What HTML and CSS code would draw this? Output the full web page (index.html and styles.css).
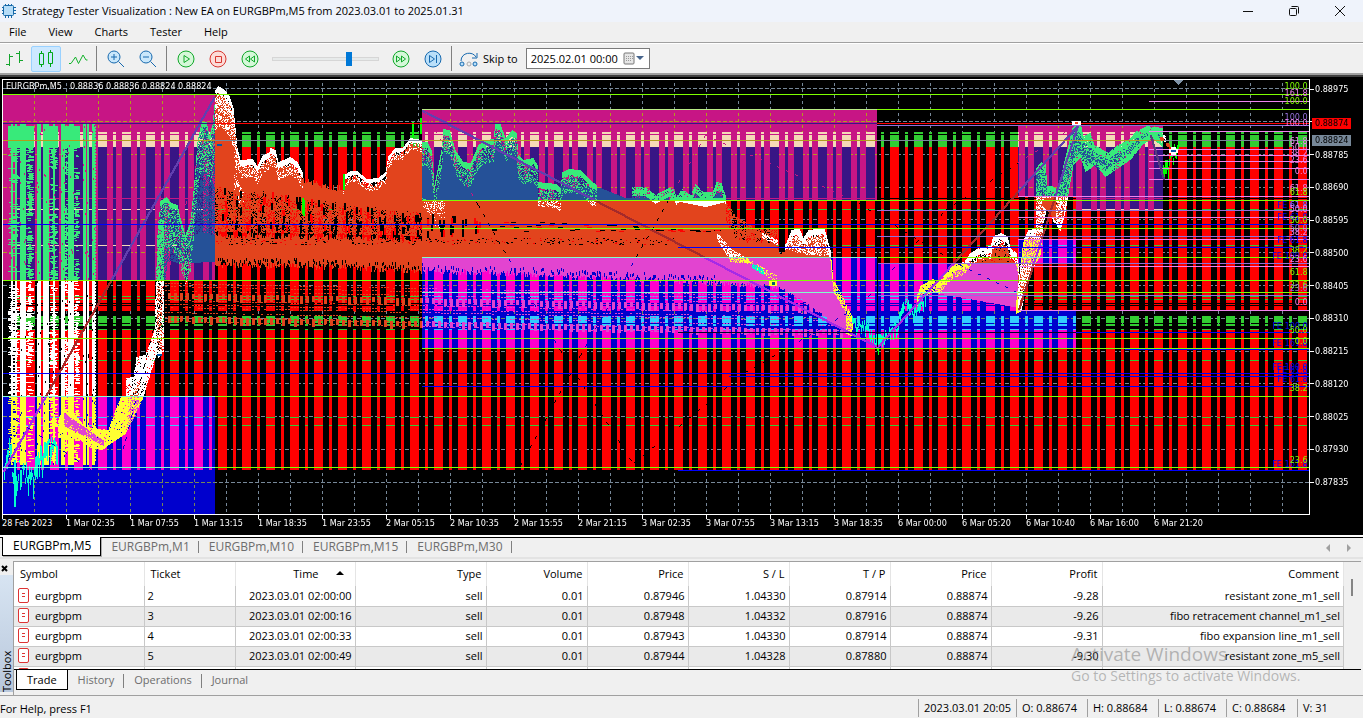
FILE: index.html
```html
<!DOCTYPE html>
<html lang="en">
<head>
<meta charset="utf-8">
<title>Strategy Tester Visualization</title>
<link rel="stylesheet" href="styles.css">
</head>
<body>
<div class="app">
  <header class="titlebar">
    <svg class="app-icon" viewBox="0 0 16 16" width="16" height="16"><g stroke="#1668a8" fill="none"><path d="M4.500 1v14M7.500 1v14M10.500 1v14M1 4.500h14M1 7.500h14M1 10.500h14"/><rect x="2.500" y="2.500" width="10" height="10" rx="1" fill="#b5dcf7"/></g></svg>
    <h1 class="title">Strategy Tester Visualization : New EA on EURGBPm,M5 from 2023.03.01 to 2025.01.31</h1>
    <div class="window-buttons">
      <button class="win-btn" aria-label="Minimize"><svg width="12" height="12"><path d="M1 6.500h10" stroke="#111"/></svg></button>
      <button class="win-btn" aria-label="Restore"><svg width="12" height="12" fill="none" stroke="#111"><rect x="1.500" y="3.500" width="7" height="7" rx="1"/><path d="M3.500 1.500h6q1 0 1 1v6"/></svg></button>
      <button class="win-btn" aria-label="Close"><svg width="12" height="12"><path d="M1 1l10 10M11 1L1 11" stroke="#111"/></svg></button>
    </div>
  </header>
  <nav class="menubar">
    <button class="menu-item">File</button>
    <button class="menu-item">View</button>
    <button class="menu-item">Charts</button>
    <button class="menu-item">Tester</button>
    <button class="menu-item">Help</button>
  </nav>
  <div class="toolbar">
    <button class="tool" aria-label="Bars"><svg width="20" height="20" fill="none" stroke="#14a52c"><path d="M2 15.500h3M5.500 5v12M5.500 7.500H9M12 4.500h3.500M15.500 2v12M15.500 11.500H19"/></svg></button>
    <button class="tool tool-active" aria-label="Candles"><svg width="20" height="20" fill="none" stroke="#00a816"><path d="M5.500 2v3M5.500 15v3M14.500 1v3M14.500 14v4"/><path d="M3.500 4.500h4v11h-4zM12.500 3.500h4v11h-4z"/></svg></button>
    <button class="tool" aria-label="Line"><svg width="20" height="20" fill="none" stroke="#14b32c"><path d="M1 14.500h2L7.500 8l3 6.500L15 6l3 5h1.500"/></svg></button>
    <span class="sep"></span>
    <button class="tool" aria-label="Zoom in"><svg width="20" height="20" fill="none" stroke="#1769ae"><circle cx="8" cy="8" r="6" fill="#c9e7fb"/><path d="M8 5v6M5 8h6M12.500 12.500L18 18"/></svg></button>
    <button class="tool" aria-label="Zoom out"><svg width="20" height="20" fill="none" stroke="#1769ae"><circle cx="8" cy="8" r="6" fill="#c9e7fb"/><path d="M5 8h6M12.500 12.500L18 18"/></svg></button>
    <span class="sep"></span>
    <button class="tool" aria-label="Play"><svg width="20" height="20" fill="none" stroke="#12a82b"><circle cx="10" cy="10" r="8" fill="#d5f8d9"/><path d="M8 6.500v7l5.500-3.500z"/></svg></button>
    <button class="tool" aria-label="Stop"><svg width="20" height="20" fill="none" stroke="#d8362f"><circle cx="10" cy="10" r="8" fill="#fcdcd8"/><path d="M7.500 7.500h6v6h-6z"/></svg></button>
    <button class="tool" aria-label="Slower"><svg width="20" height="20" fill="none" stroke="#12a82b"><circle cx="10" cy="10" r="8" fill="#d5f8d9"/><path d="M9.500 7v6L5.500 10zM14.500 7v6l-4-3z"/></svg></button>
    <input class="speed" type="range" min="0" max="100" value="74" aria-label="Speed">
    <button class="tool" aria-label="Faster"><svg width="20" height="20" fill="none" stroke="#12a82b"><circle cx="10" cy="10" r="8" fill="#d5f8d9"/><path d="M5.500 7v6l4-3zM10.500 7v6l4-3z"/></svg></button>
    <button class="tool" aria-label="Step"><svg width="20" height="20" fill="none" stroke="#1769ae"><circle cx="10" cy="10" r="8" fill="#b9dff9"/><path d="M6.500 6.500v7l5-3.500zM13.500 6v8"/></svg></button>
    <span class="sep"></span>
    <button class="skip"><svg width="20" height="20" fill="none" stroke="#1769ae"><path d="M2 12C2 3 14 2 17 8M18 4v5h-5"/><circle cx="3" cy="15" r="2" fill="#b9dff9"/><circle cx="10" cy="15" r="2" stroke="#aaa"/><circle cx="16" cy="15" r="2" fill="#b9dff9"/></svg>Skip to</button>
    <div class="datebox">
      <input class="date" type="text" value="2025.02.01 00:00" aria-label="Skip to date">
      <button class="date-btn" aria-label="Open calendar"><svg width="22" height="13"><rect x="1" y="1" width="10" height="11" rx="1" fill="#e6e6e6" stroke="#777"/><path d="M3 4.500h7M3 6.500h7M3 8.500h5" stroke="#999" stroke-dasharray="1 1"/><path d="M13 4h8l-4 4z" fill="#46648c"/></svg></button>
    </div>
  </div>

  <main class="chart">
    <div class="plot">
      <canvas class="plot-canvas" id="plot" width="1306" height="434"></canvas>
      <svg class="levels" id="levels"></svg>
      <div class="quote"><span>EURGBPm,M5</span><span>0.88836 0.88836 0.88824 0.88824</span></div>
    </div>
    <div class="prices">
      <div class="price">0.88975</div><div class="price"></div><div class="price">0.88785</div><div class="price">0.88690</div><div class="price">0.88595</div><div class="price">0.88500</div><div class="price">0.88405</div><div class="price">0.88310</div><div class="price">0.88215</div><div class="price">0.88120</div><div class="price">0.88025</div><div class="price">0.87930</div><div class="price">0.87835</div>
      <div class="tag tag-ask">0.88874</div>
      <div class="tag tag-bid">0.88824</div>
    </div>
    <div class="times">
      <span class="time">28 Feb 2023</span><span class="time">1 Mar 02:35</span><span class="time">1 Mar 07:55</span><span class="time">1 Mar 13:15</span><span class="time">1 Mar 18:35</span><span class="time">1 Mar 23:55</span><span class="time">2 Mar 05:15</span><span class="time">2 Mar 10:35</span><span class="time">2 Mar 15:55</span><span class="time">2 Mar 21:15</span><span class="time">3 Mar 02:35</span><span class="time">3 Mar 07:55</span><span class="time">3 Mar 13:15</span><span class="time">3 Mar 18:35</span><span class="time">6 Mar 00:00</span><span class="time">6 Mar 05:20</span><span class="time">6 Mar 10:40</span><span class="time">6 Mar 16:00</span><span class="time">6 Mar 21:20</span><span class="time-rest"></span>
    </div>
  </main>

  <nav class="tabs">
    <button class="tab tab-on">EURGBPm,M5</button><button class="tab">EURGBPm,M1</button><button class="tab">EURGBPm,M10</button><button class="tab">EURGBPm,M15</button><button class="tab">EURGBPm,M30</button>
    <span class="tab-scroll"><svg width="28" height="8" fill="#a0a0a0"><path d="M5 0v8L1 4zM22 0v8l4-4z"/></svg></span>
  </nav>

  <section class="toolbox">
    <div class="side">
      <button class="side-close" aria-label="Close toolbox"><svg width="7" height="7"><path d="M1 1l5 5M6 1L1 6" stroke="#000" stroke-width="2"/></svg></button>
      <div class="side-label"><span class="side-text">Toolbox</span></div>
    </div>
    <div class="panel">
      <div class="scroller">
        <table class="trades">
          <colgroup><col class="c130"><col class="c91"><col class="c120"><col class="c131"><col class="c101"><col class="c101"><col class="c101"><col class="c101"><col class="c101"><col class="c111"><col></colgroup>
          <thead><tr><th class="l">Symbol</th><th class="l">Ticket</th><th>Time<svg class="sort" width="8" height="4"><path d="M0 4h8L4 0z"/></svg></th><th>Type</th><th>Volume</th><th>Price</th><th>S / L</th><th>T / P</th><th>Price</th><th>Profit</th><th>Comment</th></tr></thead>
          <tbody>
            <tr><td class="l"><i class="doc"></i>eurgbpm</td><td class="n">2</td><td>2023.03.01 02:00:00</td><td>sell</td><td>0.01</td><td>0.87946</td><td>1.04330</td><td>0.87914</td><td>0.88874</td><td>-9.28</td><td>resistant zone_m1_sell</td></tr>
            <tr><td class="l"><i class="doc"></i>eurgbpm</td><td class="n">3</td><td>2023.03.01 02:00:16</td><td>sell</td><td>0.01</td><td>0.87948</td><td>1.04332</td><td>0.87916</td><td>0.88874</td><td>-9.26</td><td>fibo retracement channel_m1_sel</td></tr>
            <tr><td class="l"><i class="doc"></i>eurgbpm</td><td class="n">4</td><td>2023.03.01 02:00:33</td><td>sell</td><td>0.01</td><td>0.87943</td><td>1.04330</td><td>0.87914</td><td>0.88874</td><td>-9.31</td><td>fibo expansion line_m1_sell</td></tr>
            <tr><td class="l"><i class="doc"></i>eurgbpm</td><td class="n">5</td><td>2023.03.01 02:00:49</td><td>sell</td><td>0.01</td><td>0.87944</td><td>1.04328</td><td>0.87880</td><td>0.88874</td><td>-9.30</td><td>resistant zone_m5_sell</td></tr>
            <tr><td class="l"><i class="doc"></i></td><td></td><td></td><td></td><td></td><td></td><td></td><td></td><td></td><td></td><td></td></tr>
          </tbody>
        </table>
        <div class="scrollbar"><div class="thumb"></div></div>
      </div>
      <nav class="subtabs"><button class="subtab subtab-on">Trade</button><button class="subtab">History</button><button class="subtab">Operations</button><button class="subtab">Journal</button></nav>
    </div>
    <div class="watermark"><div class="wm-big">Activate Windows</div><div class="wm-small">Go to Settings to activate Windows.</div></div>
  </section>

  <footer class="status">
    <span class="help">For Help, press F1</span>
    <span class="cell cell-date">2023.03.01 20:05</span><span class="cell">O: 0.88674</span><span class="cell">H: 0.88684</span><span class="cell">L: 0.88674</span><span class="cell">C: 0.88684</span><span class="cell">V: 31</span>
  </footer>
</div>
<script src="chart.js"></script>
</body>
</html>
```
FILE: styles.css
```css
* { box-sizing: border-box; }
body { margin: 0; background: #f0f0f0; color: #000; font-family: "Open Sans", "Noto Sans", sans-serif; font-size: 11px; }
button, input { font: inherit; color: inherit; border: 0; background: none; padding: 0; margin: 0; }
.app { display: flex; flex-direction: column; height: 100vh; min-height: 480px; overflow: hidden; }

.titlebar { display: flex; align-items: center; flex: none; height: 22px; background: #eff3fb; }
.title { flex: 1; margin: 0 0 0 5px; font-size: 11px; font-weight: 400; line-height: 20px; white-space: nowrap; }
.app-icon { margin-left: 1px; }
.window-buttons { display: flex; }
.win-btn { width: 46px; height: 18px; display: grid; place-items: center; }
.menubar { display: flex; flex: none; height: 21px; border-bottom: 1px solid #a0a0a0; padding-left: 9px; gap: 22px; }
.menu-item { line-height: 20px; }
.toolbar { display: flex; align-items: center; flex: none; height: 32px; border-top: 1px solid #fff; border-bottom: 2px solid #a0a0a0; }
.tool { width: 30px; height: 26px; margin-right: 2px; display: grid; place-items: center; flex: none; }
.tool:first-child { margin-left: -1px; }
.tool-active { background: #cce8ff; border: 1px solid #99d1ff; border-radius: 2px; }
.sep { width: 1px; height: 25px; background: #808080; margin: 0 4px 0 1px; }
.speed { -webkit-appearance: none; appearance: none; width: 107px; height: 20px; margin: 0 7px 0 5px; }
.speed::-webkit-slider-runnable-track { height: 4px; background: #e7eaea; border: 1px solid #d6d6d6; }
.speed::-webkit-slider-thumb { -webkit-appearance: none; width: 6px; height: 14px; margin-top: -6px; background: #0078d7; }
.skip { display: flex; align-items: center; gap: 4px; margin-left: 3px; white-space: nowrap; }
.datebox { display: flex; align-items: center; width: 124px; height: 21px; margin-left: 8px; background: #fff; border: 1px solid #7a7a7a; }
.date { width: 96px; padding-left: 4px; }
.date-btn { display: flex; }

.chart { flex: 1; min-height: 200px; display: grid; grid-template-columns: 1fr 53px; grid-template-rows: 1fr 20px; background: #000; border-top: 2px solid #404040; padding: 2px 0 0 2px; color: #fff; font: 9px "DejaVu Sans Condensed", "DejaVu Sans", sans-serif; }
.plot { position: relative; min-height: 0; border: 1px solid #fff; }
.plot-canvas, .levels { position: absolute; left: 0; top: 0; width: 100%; height: 100%; }
.plot-canvas { image-rendering: pixelated; }
.quote { position: absolute; left: 3px; top: 1px; display: flex; gap: 8px; line-height: 11px; white-space: nowrap; }
.prices { position: relative; display: flex; flex-direction: column; justify-content: space-between; padding: 3px 0 26px; }
.price { height: 14px; line-height: 14px; display: flex; align-items: center; gap: 1px; }
.price::before { content: ""; width: 4px; height: 1px; background: #fff; }
.tag { position: absolute; left: 2px; width: 39px; height: 11px; line-height: 11px; padding-left: 3px; color: #000; }
.tag-ask { top: 39px; background: #f00; }
.tag-bid { top: 56px; background: #778899; }
.times { display: flex; grid-column: 1; line-height: 17px; white-space: nowrap; }
.time { flex: 64 1 0; width: 0; position: relative; }
.time::before { content: ""; position: absolute; left: 0; top: 0; width: 1px; height: 4px; background: #fff; }
.time-rest { flex: 92 1 0; }

.tabs { display: flex; flex: none; height: 24px; border-top: 2px solid #fff; border-bottom: 2px solid #e3e3e3; background: linear-gradient(#000 0 1px, #f0f0f0 1px); padding-left: 2px; }
.tab { color: #6d6d6d; font-size: 12px; line-height: 18px; padding: 0 9px 0 10px; position: relative; height: 19px; }
.tab + .tab::after { content: ""; position: absolute; right: 0; top: 4px; height: 12px; width: 1px; background: #808080; }
.tab-on { background: #fff; color: #000; border: solid #000; border-width: 0 1px 1px; box-shadow: 1px 1px #aaa; }
.tab-scroll { display: flex; align-items: flex-start; margin-left: auto; padding: 7px 10px 0 0; }

.toolbox { position: relative; flex: none; display: flex; height: 136px; padding-top: 2px; }
.side { width: 13px; display: flex; flex-direction: column; }
.side-close { height: 14px; padding: 0 0 0 1px; text-align: left; line-height: 7px; }
.side-label { flex: 1; background: linear-gradient(#d7e4f2, #b9c8dc); display: flex; justify-content: center; margin-bottom: 3px; }
.side-text { writing-mode: vertical-rl; transform: rotate(180deg); line-height: 12px; }
.panel { flex: 1; min-width: 0; display: flex; flex-direction: column; border-left: 1px solid #a0a0a0; }
.scroller { display: flex; height: 109px; overflow: hidden; border-top: 1px solid #a0a0a0; border-bottom: 1px solid #000; margin-right: 2px; }
.trades { flex: 1; table-layout: fixed; border-collapse: collapse; background: #fff; width: 100%; }
.c130 { width: 130px; } .c131 { width: 131px; } .c91 { width: 91px; } .c120 { width: 120px; } .c101 { width: 101px; } .c111 { width: 111px; }
.trades th { height: 24px; padding: 0 4px 0 0; font-weight: 400; text-align: right; border-right: 1px solid #e5e5e5; line-height: 20px; }
.trades td { height: 20px; padding: 0 3px 0 0; text-align: right; border-right: 1px solid #c8c8c8; border-bottom: 1px solid #c8c8c8; white-space: nowrap; line-height: 18px; }
.trades tbody tr:nth-child(even) { background: #eaeaea; }
.trades th.l { text-align: left; padding-left: 6px; }
.trades td.l { text-align: left; padding-left: 4px; }
.trades td.n { text-align: left; padding-left: 3px; }
.sort { margin: 0 7px 3px 17px; }
.doc { display: inline-block; width: 11px; height: 15px; margin-right: 6px; vertical-align: -3px; border: 1px solid #d33; border-radius: 2px; background: linear-gradient(#d33, #d33) 3px 4px / 3px 1px no-repeat, linear-gradient(#d33, #d33) 3px 7px / 3px 1px no-repeat, #fff; }
.scrollbar { width: 17px; background: #f0f0f0; padding: 17px 0 0 7px; flex: none; }
.thumb { width: 2px; height: 17px; background: #858585; }
.subtabs { display: flex; padding-left: 2px; }
.subtab { position: relative; height: 20px; padding: 0 10px; color: #6d6d6d; line-height: 18px; }
.subtab + .subtab::after { content: ""; position: absolute; right: 0; top: 4px; width: 1px; height: 14px; background: #808080; }
.subtab:last-child::after { display: none; }
.subtab-on { background: #fff; color: #000; border: solid #000; border-width: 0 1px 1px; }
.watermark { position: absolute; right: 55px; bottom: 9px; width: 237px; color: rgba(120, 120, 120, .5); white-space: nowrap; pointer-events: none; }
.wm-big { font-size: 19px; line-height: 24px; }
.wm-small { font-size: 14px; line-height: 20px; }

.status { display: flex; align-items: center; flex: none; height: 23px; border-top: 1px solid #a0a0a0; padding-top: 2px; }
.help { flex: 1; }
.cell { border-left: 1px solid #a0a0a0; padding-left: 5px; width: 71px; line-height: 18px; white-space: nowrap; }
.cell-date { width: 98px; }
.cell:nth-child(5) { width: 68px; }
.cell:last-child { width: 66px; }
```
FILE: chart.js
```js
const canvas = document.getElementById('plot');
const g = canvas.getContext('2d', { willReadFrequently: true });
const X0 = 3, Y0 = 80, R = 1309, B = 514;
g.translate(-X0, -Y0);

let seed = 7;
const rnd = () => (seed = (seed * 1664525 + 1013904223) >>> 0) / 4294967296;
const rect = (c, x, y, w, h) => { g.fillStyle = c; g.fillRect(x, y, w, h); };
const ORANGE = '#e2441d', WHITE = '#fff', LIME = '#0f0', LEVEL = '#7fff00';

function at(p, x) {
  if (x <= p[0][0]) return p[0][1];
  for (let i = 1; i < p.length; i++) {
    if (x <= p[i][0]) {
      const [ax, ay] = p[i - 1], [bx, by] = p[i];
      return ay + (by - ay) * (x - ax) / (bx - ax || 1);
    }
  }
  return p[p.length - 1][1];
}
function band(c, x0, x1, top, bot, density = 1, jitter = 0) {
  for (let x = x0; x < x1; x++) {
    const a = Math.round(at(top, x) + rnd() * jitter), b = Math.round(at(bot, x) + rnd() * jitter);
    if (density >= 1) rect(c, x, a, 1, Math.max(0, b - a));
    else for (let y = a; y < b; y++) if (rnd() < density) rect(c, x, y, 1, 1);
  }
}
const shift = (p, d) => p.map(([x, y]) => [x, y + d]);
function pixline(c, x0, y0, x1, y1, size = 1, dash = 0) {
  const n = Math.max(Math.abs(x1 - x0), Math.abs(y1 - y0));
  for (let i = 0; i <= n; i++) {
    if (dash && i % (dash * 3) >= dash) continue;
    rect(c, Math.round(x0 + (x1 - x0) * i / n), Math.round(y0 + (y1 - y0) * i / n), size, size);
  }
}
function path(c, pts, size, dash) {
  for (let i = 1; i < pts.length; i++) pixline(c, ...pts[i - 1], ...pts[i], size, dash);
}
function dashes(c, x0, x1, y, h, on, period, off = 0) {
  for (let x = x0 + off; x < x1; x += period) rect(c, x, y, Math.min(on, x1 - x), h);
}
function candles(c, pts, spread) {
  for (let x = pts[0][0]; x < pts[pts.length - 1][0]; x++) {
    const y = at(pts, x) + (rnd() - .5) * spread;
    rect(c, x, Math.round(y), 1, Math.round(3 + rnd() * spread));
  }
}

rect('#000', X0, Y0, R - X0, B - Y0);

// grid
for (const y of [88, 121, 154, 187, 219, 252, 285, 318, 351, 383, 416, 449, 482]) dashes('#778899', 3, R, y, 1, 4, 6);
for (let x = 34; x < R; x += 32) for (let y = 83; y < B; y += 6) rect('#778899', x, y, 1, 3);

// session stripes
for (let k = -16; k < 39; k++) {
  for (const [x, w] of [[386 + 24 * k, 9], [401 + 24 * k, 3]]) {
    if (x < 3 || x > 1300) continue;
    rect('#f00', x, 147, w, 164);
    rect('#f00', x, 330, w, 140);
    for (const [y, h] of [[132, 2], [135, 12], [209, 1], [245, 1], [296, 1], [299, 1], [316, 7], [324, 2], [329, 1], [360, 1], [417, 1], [425, 1]]) rect('#32cd32', x, y, w, h);
    for (const y of [198, 303, 305]) rect('#000', x, y, w, 1);
  }
}

// dense columns at the left edge
for (const [x, w] of [[11, 2], [15, 2], [20, 6], [37, 4], [43, 6], [53, 2], [61, 4], [68, 6], [83, 3], [87, 2], [92, 3]]) {
  rect(WHITE, x, 124, w, 341);
  for (let y = 124; y < 465; y++) if (rnd() < .05) rect('#000', x + Math.floor(rnd() * w), y, 1, 2);
}
for (const [x, w] of [[8, 12], [26, 8], [49, 9], [65, 3], [74, 6]]) {
  let run = 0, on = false;
  for (let y = 126; y < 462; y++) {
    if (run-- <= 0) { run = 8 + rnd() * 16; on = rnd() < .7; }
    if (on ? rnd() < .8 : rnd() < .25) {
      const o = Math.floor(rnd() * w * .5);
      rect(WHITE, x + o, y, Math.ceil((w - o) * (.3 + rnd() * .7)), 1);
    }
  }
  rect(WHITE, x, 126, w, 22);
}
for (let y = 126; y < 460; y += 3) rect(WHITE, 95, y, 1, 2);

// dashed rows of order arrows
for (let x = 165; x < 845; x += 3) {
  const d = (x - 165) * .02;
  const end = x < 700 ? 1 : 1 - (x - 700) / 260;
  for (const y of [283, 286, 290, 300, 304, 307, 312, 317, 321]) if (rnd() < .62 * end + .1) rect(ORANGE, x, Math.round(y + d), 2, 1);
  if (x % 6 < 3) for (const y of [293, 316]) rect(ORANGE, x, Math.round(y + d), 3, 5 + Math.floor(rnd() * 4));
}

// first fall: white crest over the order mass
const crest1 = [[215, 90], [218, 86], [224, 90], [229, 96], [233, 108], [237, 148], [240, 160], [252, 159], [257, 166], [262, 156], [269, 152], [270, 148], [275, 150], [278, 162], [290, 157], [297, 162], [303, 174], [330, 181], [343, 183], [344, 175], [350, 171], [357, 171], [366, 179], [378, 178], [385, 172], [388, 156], [395, 148], [402, 148], [410, 138], [422, 140]];
const upperBottom = [[215, 186], [260, 190], [300, 196], [350, 204], [422, 212], [500, 220], [560, 223], [700, 229]];
const lowerTop = [[215, 232], [422, 236], [700, 238]];
const lowerBottom = [[215, 262], [300, 263], [422, 268], [500, 270], [620, 276], [720, 280], [770, 283], [800, 298], [850, 334]];
band(ORANGE, 215, 422, shift(crest1, 3), upperBottom, 1, 6);
band(WHITE, 215, 303, crest1, shift(crest1, 6));
band(WHITE, 215, 303, shift(crest1, 5), shift(crest1, 18), .35);
band(WHITE, 215, 237, crest1, shift(crest1, 40), .45);
band(WHITE, 343, 422, crest1, shift(crest1, 4));
band(WHITE, 343, 422, shift(crest1, 4), shift(crest1, 12), .35);
rect('#0058a8', 217, 144, 5, 2); rect('#0058a8', 237, 200, 5, 2);
band(WHITE, 234, 245, [[234, 175], [245, 195]], [[234, 195], [240, 204], [245, 200]], .5);

// second crest, mostly inside the upper zone
const crest2 = [[422, 142], [427, 142], [431, 150], [434, 185], [437, 170], [441, 150], [443, 129], [449, 130], [455, 150], [463, 162], [470, 163], [478, 145], [485, 140], [493, 139], [495, 123], [500, 124], [505, 138], [512, 130], [516, 133], [518, 155], [523, 160], [533, 158], [537, 165], [537, 182], [556, 184], [560, 188], [562, 172], [568, 169], [580, 170], [590, 180], [597, 186], [612, 190], [623, 200], [631, 200], [632, 187], [645, 187], [655, 195], [668, 188], [673, 189], [676, 196], [682, 189], [690, 195], [695, 184], [703, 192], [712, 192], [716, 182], [721, 183], [726, 198], [735, 213], [750, 222], [765, 234], [778, 247]];
band(ORANGE, 422, 726, shift(crest2, 8), shift(crest2, 17), .6);
band(ORANGE, 422, 726, shift(crest2, 16), lowerBottom, 1, 3);
band(ORANGE, 726, 778, shift(crest2, 3), shift(crest2, 24), .6);
band(ORANGE, 726, 778, shift(crest2, 22), lowerBottom, 1, 3);
band(ORANGE, 560, 726, [[560, 186], [600, 188], [625, 198]], lowerBottom);
band(WHITE, 422, 597, crest2, shift(crest2, 6));
band(WHITE, 422, 597, shift(crest2, 6), shift(crest2, 24), .35);
band(WHITE, 632, 726, crest2, shift(crest2, 9), .85);
band(WHITE, 670, 726, [[670, 198], [726, 198]], [[670, 200], [705, 207], [726, 202]]);
band(WHITE, 422, 445, [[422, 198], [430, 200]], [[422, 205], [431, 224], [440, 232], [445, 222]], .3);

// middle band under both crests
band(ORANGE, 215, 778, upperBottom, lowerTop, .72);
for (let x = 222; x < 720; x += 12) {
  const t = at(upperBottom, x);
  const k = x < 480 ? 7 : 3;
  for (let i = 0; i < k; i++) rect(rnd() < .55 ? '#000' : '#f00', x + Math.floor(rnd() * 7), Math.round(t + rnd() * (231 - t)), x < 480 ? 2 : 5, x < 480 ? 7 : 1);
}
band(ORANGE, 215, 776, lowerTop, lowerBottom, 1, 6);
for (let i = 0; i < 260; i++) {
  const x = 216 + Math.floor(rnd() * 460);
  rect(rnd() < .7 ? '#000' : '#f00', x, 238 + Math.floor(rnd() * 7), 1 + Math.floor(rnd() * 2), 1);
}
for (let i = 0; i < 260; i++) {
  const x = 216 + Math.floor(rnd() * 500);
  rect('#000', x, Math.round(at(lowerBottom, x) + 1 - rnd() * 6), 1, 3);
}

// last leg of the fall
const crest3 = [[715, 232], [720, 232], [723, 245], [740, 253], [760, 232], [775, 236], [780, 246], [786, 243], [791, 230], [799, 228], [803, 238], [808, 230], [824, 228], [830, 250], [833, 280], [840, 292], [850, 313], [854, 320]];
band(ORANGE, 776, 852, shift(crest3, 6), [[776, 284], [800, 298], [852, 336]], 1, 3);
band(WHITE, 785, 832, crest3, shift(crest3, 6));
band(WHITE, 785, 832, shift(crest3, 6), [[785, 248], [800, 254], [832, 257]], .5);
band(WHITE, 828, 853, crest3, shift(crest3, 12), .7);
band(WHITE, 762, 778, [[762, 233], [778, 240]], [[762, 238], [778, 246]], .6);
band(WHITE, 717, 750, [[717, 233], [730, 248], [750, 260]], [[717, 240], [730, 262], [750, 264]], .6);
band(WHITE, 746, 777, [[746, 258], [777, 276]], [[746, 262], [777, 284]], .4);
band(LIME, 752, 764, [[752, 263], [764, 270]], [[752, 268], [764, 276]], .8);
rect(WHITE, 769, 280, 8, 6); rect('#005fa0', 772, 282, 3, 3);
band(WHITE, 846, 853, [[846, 316], [853, 322]], [[846, 334], [853, 337]], .6);

// rise on the left
const riseTop = [[157, 235], [160, 201], [166, 197], [171, 203], [177, 205], [180, 218], [185, 235], [190, 222], [194, 180], [197, 142], [201, 122], [206, 122], [209, 135], [212, 125], [215, 95]];
const riseBottom = [[157, 280], [165, 280], [167, 262], [185, 263], [215, 262]];
band(ORANGE, 158, 215, riseTop, riseBottom, .65);
band(ORANGE, 190, 215, [[190, 240], [200, 232], [215, 236]], riseBottom);
band(WHITE, 158, 215, riseTop, shift(riseTop, 5));
band(WHITE, 158, 215, shift(riseTop, 5), shift(riseTop, 50), .35);
band(WHITE, 154, 164, [[154, 330], [157, 235], [158, 220]], [[154, 352], [158, 358], [163, 352]], .75);
band(ORANGE, 157, 162, [[157, 285], [162, 285]], [[157, 350], [162, 350]], .35);
band(WHITE, 126, 156, [[126, 378], [133, 377], [136, 357], [145, 355], [154, 330]], [[126, 410], [142, 400], [156, 355]], .88);
band(WHITE, 58, 143, [[58, 420], [62, 408], [72, 412], [86, 427], [108, 430], [115, 410], [121, 396]], [[58, 438], [80, 440], [90, 448], [102, 450], [113, 442], [125, 434], [143, 398]], .94);
band(ORANGE, 64, 104, [[64, 413], [104, 441]], [[64, 426], [104, 446]], .9);
band(ORANGE, 128, 140, [[128, 398], [140, 380]], [[128, 432], [140, 404]], .35);
rect('#0058a8', 157, 354, 5, 2);
candles(LIME, [[4, 460], [10, 445], [14, 480], [20, 465], [26, 470], [33, 468], [42, 450], [50, 445], [58, 440]], 20);
for (let y = 460; y < 507; y++) rect(LIME, 14, y, 2, 1);

// recovery
const midTop = [[917, 294], [920, 286], [932, 279], [940, 281], [947, 270], [955, 264], [964, 262], [969, 254], [978, 248], [990, 246], [993, 236], [1001, 233], [1007, 236], [1010, 248], [1016, 253], [1020, 275]];
band(ORANGE, 935, 1019, [[935, 287], [958, 268], [965, 262], [1018, 262]], [[935, 293], [1019, 308]]);
band(WHITE, 917, 1019, midTop, shift(midTop, 7), .95);
band(WHITE, 917, 1019, shift(midTop, 7), shift(midTop, 13), .5);
band(ORANGE, 978, 1016, shift(midTop, 11), [[978, 264], [1016, 264]], .85);
candles(LIME, [[852, 318], [858, 325], [865, 322], [872, 335], [878, 343], [885, 332], [897, 325], [900, 308], [908, 298], [912, 312], [920, 303], [926, 293]], 9);
rect(LIME, 876, 334, 5, 12);

const lastTop = [[1016, 300], [1020, 265], [1023, 240], [1028, 230], [1035, 229], [1036, 168], [1040, 162], [1045, 164], [1047, 186], [1052, 186], [1058, 190], [1063, 165], [1068, 145], [1073, 123], [1080, 123], [1083, 136], [1090, 133], [1094, 145], [1108, 153], [1117, 145], [1128, 140], [1136, 131], [1146, 126], [1163, 128]];
const lastBottom = [[1016, 314], [1021, 311], [1026, 285], [1034, 266], [1040, 255], [1043, 225], [1047, 205], [1053, 222], [1060, 231], [1065, 212], [1069, 188], [1073, 165], [1080, 158], [1085, 172], [1095, 165], [1105, 177], [1118, 168], [1130, 160], [1142, 145], [1152, 138], [1163, 148]];
band(WHITE, 1016, 1163, lastTop, lastBottom, .95);
band(ORANGE, 1020, 1163, shift(lastTop, 7), shift(lastBottom, -6), .4);
band(ORANGE, 1042, 1056, [[1042, 200], [1056, 196]], [[1042, 205], [1056, 222]]);
band(ORANGE, 1080, 1100, [[1080, 150], [1100, 160]], [[1080, 158], [1100, 170]], .4);
band(WHITE, 1150, 1166, [[1150, 133], [1166, 135]], [[1150, 138], [1166, 142]], .8);
candles(LIME, [[1163, 165], [1170, 160], [1176, 145], [1179, 138]], 12);
for (const [x, y] of [[302, 198], [303, 200], [412, 122], [420, 118], [343, 174]]) rect(LIME, x, y, 2, 16);

// trend lines
pixline('#a52a2a', 3, 470, 215, 94, 2);
pixline('#a52a2a', 422, 110, 876, 346, 2);
pixline('#a52a2a', 877, 346, 1077, 125, 2);
pixline('#a52a2a', 1018, 309, 1077, 125, 2);
path('#000', [[3, 411], [113, 484], [125, 440], [160, 300], [215, 92]], 1, 4);
path('#000', [[425, 112], [478, 205], [560, 350], [634, 465]], 1, 3);
path('#000', [[520, 465], [580, 355], [668, 200], [705, 135]], 1, 3);
path('#000', [[705, 135], [850, 198], [960, 265], [1055, 310]], 1, 3);
path('#000', [[634, 462], [745, 372], [860, 305], [945, 210], [1075, 125]], 1, 3);

// lines that belong below the zones
rect('#f00', 3, 123, R - 3, 1);
rect('#778899', 3, 140, R - 3, 1);
for (const [x, y] of [[422, 109], [422, 257], [422, 292], [3, 396], [3, 467]]) rect(LEVEL, x, y, R - x, 1);
rect('#00f', 678, 332, R - 678, 1);
rect('#ee82ee', 1018, 310, R - 1018, 1);

// zones invert what they cover, channel by channel
const img = g.getImageData(0, 0, canvas.width, canvas.height), d = img.data;
function zone(x0, y0, x1, y1, r, gr, b) {
  for (let y = y0 - Y0; y < y1 - Y0; y++) for (let x = x0 - X0; x < x1 - X0; x++) {
    const i = (y * canvas.width + x) * 4;
    d[i] ^= r; d[i + 1] ^= gr; d[i + 2] ^= b;
  }
}
const MAG = [0xc7, 0x15, 0x85], BLUE = [0, 0, 0xcd];
zone(3, 94, 215, 280, ...MAG);
zone(3, 396, 215, 514, ...BLUE);
zone(422, 109, 877, 200, ...MAG);
zone(422, 257, 877, 349, ...BLUE);
zone(877, 263, 1076, 349, ...BLUE);
zone(1018, 239, 1076, 311, ...BLUE);
zone(1018, 126, 1076, 197, ...MAG);
zone(1076, 126, 1163, 210, ...MAG);
g.putImageData(img, 0, 0);

// level lines above the zones
for (const [x, y] of [[3, 94], [422, 200], [422, 228], [3, 280], [3, 338], [422, 348]]) rect(LEVEL, x, y, R - x, 1);
for (const [x, y] of [[3, 224], [678, 247], [3, 373], [729, 376], [422, 386], [678, 470], [1125, 210], [1125, 349]]) rect('#00f', x, y, R - x, 1);
for (const [x, y] of [[1149, 101], [1149, 131], [1149, 149], [1149, 155], [1149, 161], [1149, 168], [1149, 179], [1018, 196], [1018, 217], [1018, 239], [1018, 266]]) rect('#ee82ee', x, y, R - x, 1);
for (const [x, y] of [[877, 125], [877, 210], [877, 236], [877, 263], [877, 295]]) rect('#9370db', x, y, R - x, 1);
rect('#000', 877, 257, 1, 90);
path(ORANGE, [[1160, 137], [1173, 150]], 3, 2);
rect(WHITE, 1171, 147, 5, 8); rect(WHITE, 1169, 149, 9, 4); rect('#0058a8', 1171, 150, 5, 2);
path('#5a3c7c', [[1150, 135], [1163, 178]], 2);
rect(WHITE, 1072, 121, 9, 4); rect('#f04020', 1075, 122, 3, 2);
for (let i = 0; i < 5; i++) rect('#8093a8', 1174 + i, 80 + i, 9 - 2 * i, 1);

// level captions
const captions = [['100.0', 'lime', 86], ['161.8', 'violet', 93], ['100.0', 'lime', 101], ['100.0', 'purple', 117], ['100.0', 'violet', 123], ['61.8', 'violet', 141], ['50.0', 'violet', 147], ['38.2', 'violet', 153], ['23.6', 'violet', 160], ['0.0', 'violet', 171], ['61.8', 'violet', 188], ['61.8', 'lime', 192], ['FE 61.8', 'blue', 205], ['61.8', 'purple', 205], ['50.0', 'violet', 209], ['FE 61.8', 'blue', 217], ['50.0', 'lime', 220], ['50.0', 'purple', 228], ['38.2', 'violet', 232], ['FE 61.8', 'blue', 240], ['38.2', 'lime', 250], ['FE 100.0', 'blue', 256], ['23.6', 'violet', 259], ['61.8', 'lime', 272], ['23.6', 'lime', 285], ['23.6', 'purple', 288], ['0.0', 'violet', 302], ['FE 100.0', 'blue', 326], ['50.0', 'lime', 330], ['FE 161.8', 'blue', 343], ['0.0', 'lime', 341], ['FE 100.0', 'blue', 367], ['FE 61.8', 'blue', 370], ['FE 61.8', 'blue', 379], ['38.2', 'lime', 388], ['FE 161.8', 'blue', 464], ['23.6', 'lime', 460]];
const fills = { lime: LEVEL, violet: '#ee82ee', purple: '#9370db', blue: '#0000ff' };
const levels = document.getElementById('levels');
for (const [text, color, y] of captions) {
  const t = document.createElementNS('http://www.w3.org/2000/svg', 'text');
  t.setAttribute('x', '99.9%');
  t.setAttribute('y', (y - Y0) / 434 * 100 + '%');
  t.setAttribute('dy', '3');
  t.setAttribute('text-anchor', 'end');
  t.setAttribute('fill', fills[color]);
  t.textContent = text;
  levels.appendChild(t);
}
```
